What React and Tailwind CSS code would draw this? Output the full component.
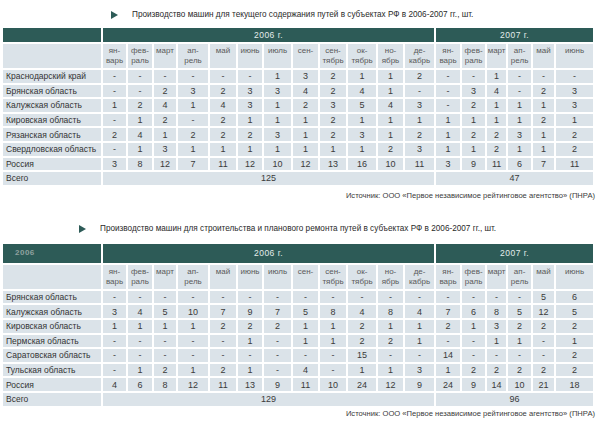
import React from "react";

const FONT = { fontFamily: '"Liberation Sans", Arial, sans-serif' };

const WIDTHS = [
  "w-[98px]",
  "w-[23px]", "w-[24px]", "w-[22px]", "w-[30px]", "w-[26px]", "w-[24px]",
  "w-[27px]", "w-[25px]", "w-[26px]", "w-[28px]", "w-[25px]", "w-[29px]",
  "w-[24px]", "w-[23px]", "w-[19px]", "w-[23px]", "w-[21px]", "w-[37px]",
];

const MONTHS_2006 = [
  ["ян-", "варь"], ["фев-", "раль"], ["март"], ["ап-", "рель"], ["май"], ["июнь"],
  ["июль"], ["сен-"], ["сен-", "тябрь"], ["ок-", "тябрь"], ["но-", "ябрь"], ["де-", "кабрь"],
];
const MONTHS_2007 = [
  ["ян-", "варь"], ["фев-", "раль"], ["март"], ["ап-", "рель"], ["май"], ["июнь"],
];

const TABLE_1 = {
  rows: [
    ["Краснодарский край", "- - - - - - 1 3 2 1 1 2 - - 1 - - -"],
    ["Брянская область", "- - 2 3 2 3 3 4 2 4 1 - - 3 4 - 2 3"],
    ["Калужская область", "1 2 4 1 4 3 1 2 3 5 4 3 - 2 1 1 1 3"],
    ["Кировская область", "- 1 2 - 2 1 1 1 2 1 1 1 1 1 1 1 2 1"],
    ["Рязанская область", "2 4 1 2 2 2 3 1 2 3 1 2 1 2 2 3 1 2"],
    ["Свердловская область", "- 1 3 1 1 1 1 1 1 1 2 3 1 1 2 1 1 2"],
    ["Россия", "3 8 12 7 11 12 10 12 13 16 10 11 3 9 11 6 7 11"],
  ],
  total: ["125", "47"],
};

const TABLE_2 = {
  rows: [
    ["Брянская область", "- - - - - - - - - - - - - - - - 5 6"],
    ["Калужская область", "3 4 5 10 7 9 7 5 8 4 8 4 7 6 8 5 12 5"],
    ["Кировская область", "1 1 1 1 2 2 2 1 1 2 1 1 2 1 3 2 2 2"],
    ["Пермская область", "- - - - - 1 - 1 1 2 2 1 - - 1 1 - 1"],
    ["Саратовская область", "- - - - - - - - - 15 - - 14 - - - - 2"],
    ["Тульская область", "- 1 2 1 2 1 - 4 - 1 1 3 1 2 2 2 2 2"],
    ["Россия", "4 6 8 12 11 13 9 11 10 24 12 9 24 9 14 10 21 18"],
  ],
  total: ["129", "96"],
};

const cell = "bg-[#dbe3e9] p-0";

function Title({ children, indent, top, height }) {
  return (
    <div className={`flex items-start ${indent} ${top} ${height}`}>
      <svg width="7" height="8" viewBox="0 0 7 8" className="mt-[2px] shrink-0">
        <polygon points="0,0 7,4 0,8" fill="#2d5b57" />
      </svg>
      <span className="ml-[14px] text-[8.2px] leading-[11px] text-[#2a2a2a]">{children}</span>
    </div>
  );
}

function Source({ top }) {
  return (
    <div className={`${top} pr-[5px] text-right text-[7.6px] leading-[10px] text-[#3a3a3a]`}>
      Источник: ООО «Первое независимое рейтинговое агентство» (ПНРА)
    </div>
  );
}

function MonthCell({ m }) {
  return (
    <td className={`${cell} align-top text-center pt-[2px] text-[8px] leading-[10px] text-[#5a5a5a]`}>
      {m[0]}
      {m[1] && <br />}
      {m[1]}
    </td>
  );
}

function DataTable({ data, headH, corner }) {
  return (
    <table className="ml-px w-[594px] table-fixed border-separate border-spacing-[2px]">
      <colgroup>
        {WIDTHS.map((w, i) => (
          <col key={i} className={w} />
        ))}
      </colgroup>
      <tbody>
        <tr className={headH}>
          <td className="bg-[#2d5b57] p-0 pl-[12px] text-[8px] font-bold tracking-[0.5px] text-[#8fa19f]">
            {corner}
          </td>
          <td colSpan={12} className="bg-[#2d5b57] p-0 text-center text-[8.5px] tracking-[0.5px] text-[#e3ecea]">
            2006 г.
          </td>
          <td colSpan={6} className="bg-[#2d5b57] p-0 text-center text-[8.5px] tracking-[0.5px] text-[#e3ecea]">
            2007 г.
          </td>
        </tr>
        <tr className="h-[24px]">
          <td className={cell} />
          {MONTHS_2006.map((m, i) => (
            <MonthCell key={i} m={m} />
          ))}
          {MONTHS_2007.map((m, i) => (
            <MonthCell key={"b" + i} m={m} />
          ))}
        </tr>
        {data.rows.map(([label, vals]) => (
          <tr key={label} className="h-[12.6px]">
            <td className={`${cell} pl-[3px] text-[8.5px] leading-[12px] text-[#333] whitespace-nowrap`}>{label}</td>
            {vals.split(" ").map((v, i) => (
              <td key={i} className={`${cell} text-center text-[9px] leading-[12px] text-[#3a3a3a]`}>
                {v}
              </td>
            ))}
          </tr>
        ))}
        <tr className="h-[12.6px]">
          <td className={`${cell} pl-[3px] text-[8.5px] leading-[12px] text-[#333]`}>Всего</td>
          <td colSpan={12} className={`${cell} text-center text-[9px] leading-[12px] text-[#3a3a3a]`}>
            {data.total[0]}
          </td>
          <td colSpan={6} className={`${cell} text-center text-[9px] leading-[12px] text-[#3a3a3a]`}>
            {data.total[1]}
          </td>
        </tr>
      </tbody>
    </table>
  );
}

export default function App() {
  return (
    <div className="w-[600px] h-[429px] bg-white overflow-hidden" style={FONT}>
      <Title indent="pl-[111px]" top="pt-[9px]" height="h-[26px]">
        Производство машин для текущего содержания путей в субъектах РФ в 2006-2007 гг., шт.
      </Title>
      <DataTable data={TABLE_1} headH="h-[14px]" />
      <Source top="pt-[4px]" />
      <Title indent="pl-[79px]" top="pt-[22px]" height="h-[41px]">
        Производство машин для строительства и планового ремонта путей в субъектах РФ в 2006-2007 гг., шт.
      </Title>
      <DataTable data={TABLE_2} headH="h-[19px]" corner="2006" />
      <Source top="pt-px" />
    </div>
  );
}
